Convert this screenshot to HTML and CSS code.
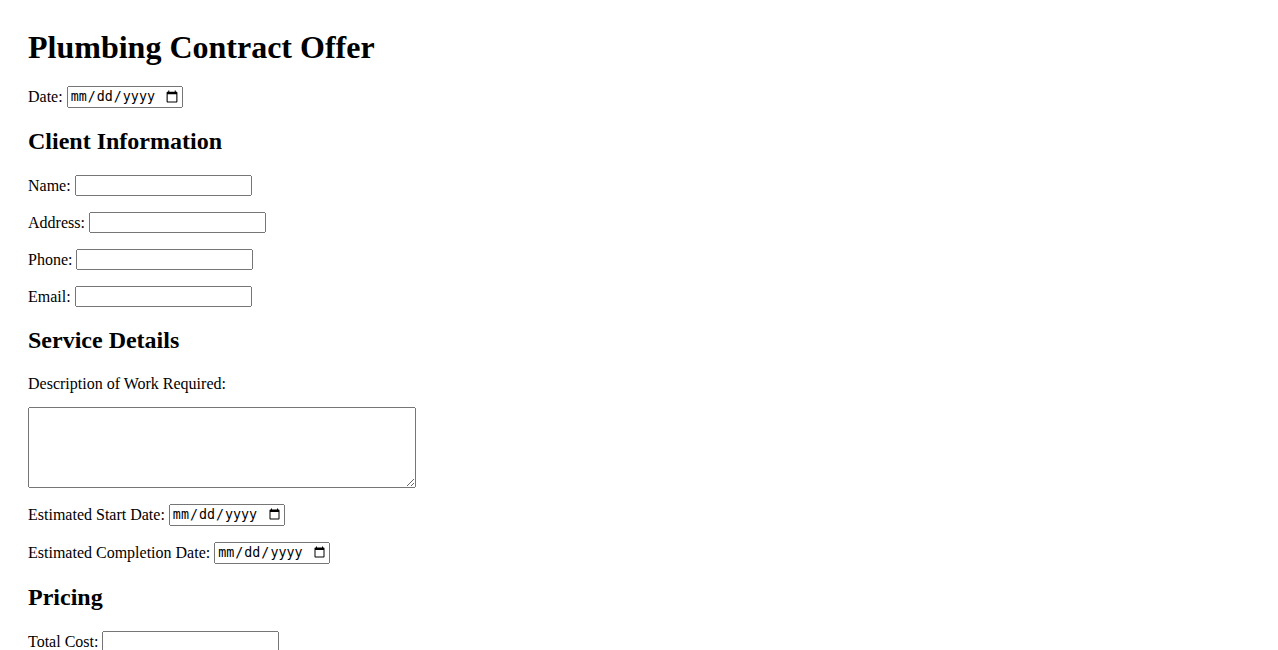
FILE: index.html
```html
<!DOCTYPE html>
<html>
<head>
<meta charset="utf-8">
<title>Plumbing Contract Offer</title>
<link rel="stylesheet" href="styles.css">
</head>
<body>
<div class="page">
<h1 class="title">Plumbing Contract Offer</h1>
<p class="field field-date"><label>Date:</label><input type="date" class="date"></p>
<h2 class="section">Client Information</h2>
<p class="field"><label>Name:</label><input type="text" class="text"></p>
<p class="field"><label>Address:</label><input type="text" class="text"></p>
<p class="field"><label>Phone:</label><input type="text" class="text"></p>
<p class="field"><label>Email:</label><input type="text" class="text"></p>
<h2 class="section">Service Details</h2>
<p class="desc"><label>Description of Work Required:</label></p>
<textarea class="area" rows="5" cols="50"></textarea>
<p class="field field-date"><label>Estimated Start Date:</label><input type="date" class="date"></p>
<p class="field field-date"><label>Estimated Completion Date:</label><input type="date" class="date"></p>
<h2 class="section">Pricing</h2>
<p class="field"><label>Total Cost:</label><input type="text" class="text"></p>
</div>
</body>
</html>
```
FILE: styles.css
```css
body {
  margin: 0;
  font-family: "Liberation Serif", "Times New Roman", serif;
  font-size: 16px;
  color: #000;
  background: #fff;
}
.page {
  padding: 8px 28px;
}
.title {
  font-size: 32px;
  line-height: 37px;
  margin: 21.44px 0 19.56px;
}
.section {
  font-size: 24px;
  line-height: 27.6px;
  margin: 19.92px 0;
}
.field {
  display: flex;
  align-items: center;
  gap: 4px;
  height: 21px;
  margin: 16px 0;
}
.field-date {
  height: 22px;
}
.desc {
  margin: 16px 0 13.8px;
  line-height: 18.4px;
}
.text {
  width: 177px;
  height: 21px;
  box-sizing: border-box;
  margin: 0;
}
.date {
  width: 116px;
  height: 22px;
  box-sizing: border-box;
  margin: 0;
}
.area {
  display: block;
  width: 388px;
  height: 81px;
  box-sizing: border-box;
  margin: 0;
}
```
